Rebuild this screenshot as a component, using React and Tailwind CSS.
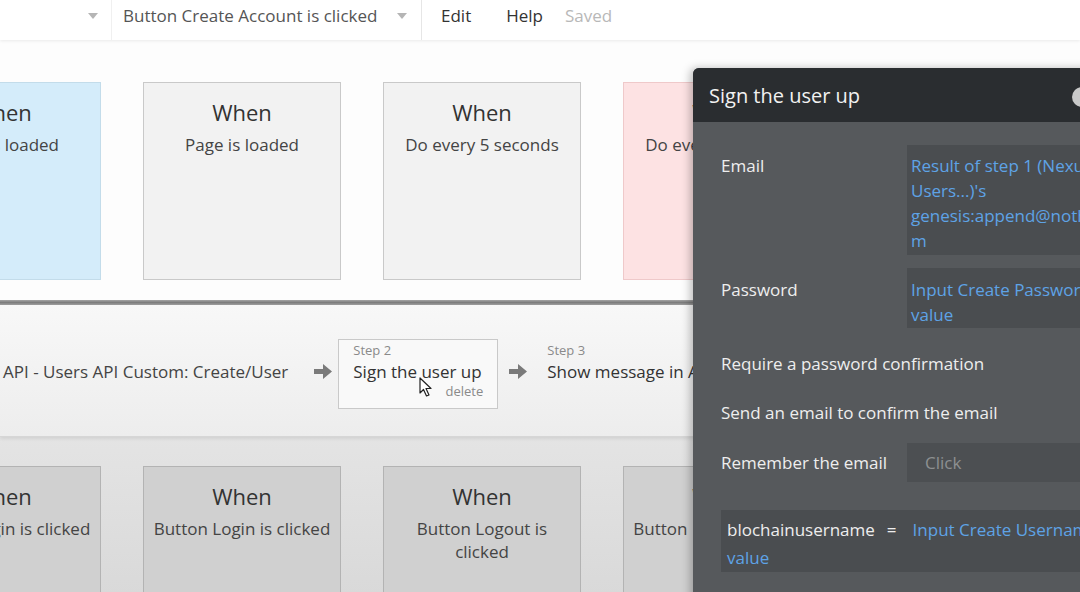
import React from "react";

function Arrow() {
  return (
    <svg width="18" height="17" viewBox="0 0 18 17" className="shrink-0">
      <path d="M0 6 H9 V1 L18 8.5 L9 16 V11 H0 Z" fill="#7a7a7a" />
    </svg>
  );
}

function Caret() {
  return (
    <svg width="10" height="6" viewBox="0 0 10 6">
      <path d="M0 0 H10 L5 6 Z" fill="#b5b5b5" />
    </svg>
  );
}

function Card({ tone, sub }) {
  const styles = {
    blue: "bg-[#d4ecfa] border-[#c3dcea]",
    gray: "bg-[#f2f2f2] border-[#c9c9c9]",
    pink: "bg-[#fde2e3] border-[#efc9ca]",
    dark: "bg-[#d0d0d0] border-[#b3b3b3]",
  };
  return (
    <div
      className={`w-[198px] h-[198px] shrink-0 border ${styles[tone]} flex flex-col items-center pt-[15px] px-[6px] text-center`}
    >
      <div className="text-[22px] leading-[28px] text-[#333]">When</div>
      <div className="mt-[7px] text-[17px] leading-[23px] text-[#444]">{sub}</div>
    </div>
  );
}

export default function App() {
  return (
    <div className="relative w-[1080px] h-[592px] overflow-hidden bg-white font-['Open_Sans',sans-serif]">
      {/* top bar */}
      <div className="h-[40px] flex items-stretch bg-white shadow-[0_1px_3px_rgba(0,0,0,0.08)] relative z-10">
        <div className="w-[112px] flex items-center justify-end pr-[13px] pb-[8px] border-r border-[#f0f0f0]">
          <Caret />
        </div>
        <div className="w-[310px] flex items-center pl-[11px] pb-[8px] border-r border-[#e6e6e6]">
          <span className="text-[17px] text-[#555] whitespace-nowrap">Button Create Account is clicked</span>
          <span className="ml-[20px]">
            <Caret />
          </span>
        </div>
        <div className="flex items-center pl-[19px] pb-[8px] text-[17px]">
          <span className="text-[#333]">Edit</span>
          <span className="ml-[35px] text-[#333]">Help</span>
          <span className="ml-[22px] text-[#b8b8b8]">Saved</span>
        </div>
      </div>

      {/* top cards */}
      <div className="h-[260px] pt-[42px] bg-[#fdfdfd]">
        <div className="flex gap-[42px] ml-[-97px]">
          <Card tone="blue" sub="Page is loaded" />
          <Card tone="gray" sub="Page is loaded" />
          <Card tone="gray" sub="Do every 5 seconds" />
          <Card tone="pink" sub="Do every 5 seconds" />
          <Card tone="gray" sub="Page is loaded" />
        </div>
      </div>

      {/* divider */}
      <div className="h-[5px] bg-gradient-to-b from-[#a5a5a5] via-[#7d7d7d] to-[#a0a0a0]" />

      {/* step row */}
      <div className="relative h-[132px] flex items-start pt-[34px] pl-[3px] bg-gradient-to-b from-[#f8f8f8] to-[#ededed] border-b border-[#d6d6d6] shadow-[0_2px_3px_rgba(0,0,0,0.08)]">
        <span className="mt-[22px] text-[17px] leading-[22px] text-[#444] whitespace-nowrap">API - Users API Custom: Create/User</span>
        <span className="ml-[26px] mt-[24px]">
          <Arrow />
        </span>
        <div className="ml-[6px] w-[160px] h-[70px] border border-[#c9c9c9] bg-[#f9f9f9] flex flex-col pl-[14px] pr-[14px] pt-[1px]">
          <span className="text-[13px] leading-[18px] text-[#8a8a8a]">Step 2</span>
          <span className="text-[17px] leading-[25px] text-[#333] whitespace-nowrap">Sign the user up</span>
          <span className="-mt-[2px] text-[13px] leading-[18px] text-[#8a8a8a] self-end">delete</span>
        </div>
        <span className="ml-[11px] mt-[24px]">
          <Arrow />
        </span>
        <div className="ml-[20px] pt-[2px] flex flex-col">
          <span className="text-[13px] leading-[18px] text-[#8a8a8a]">Step 3</span>
          <span className="text-[17px] leading-[25px] text-[#333] whitespace-nowrap">Show message in Alert</span>
        </div>
        {/* cursor */}
        <svg
          className="absolute left-[419px] top-[72px]"
          width="14"
          height="20"
          viewBox="0 0 14 20"
        >
          <path d="M1 1 L1 16 L4.5 12.5 L7.5 19 L10 18 L7 11.5 L12 11.5 Z" fill="#fff" stroke="#222" strokeWidth="1.2" strokeLinejoin="round" />
        </svg>
      </div>

      {/* bottom cards */}
      <div className="h-[200px] pt-[29px] bg-gradient-to-b from-[#e4e4e4] to-[#d6d6d6]">
        <div className="flex gap-[42px] ml-[-97px]">
          <Card tone="dark" sub="Button Login is clicked" />
          <Card tone="dark" sub="Button Login is clicked" />
          <Card tone="dark" sub="Button Logout is clicked" />
          <Card tone="dark" sub="Button Reset is clicked" />
          <Card tone="dark" sub="Button Reset is clicked" />
        </div>
      </div>

      {/* dark panel */}
      <div className="absolute left-[693px] top-[68px] w-[420px] h-[560px] rounded-tl-[6px] overflow-hidden bg-[#56595c] shadow-[-3px_0_8px_rgba(0,0,0,0.25)] z-20">
        <div className="relative h-[54px] bg-[#2a2d30] flex items-center pl-[16px]">
          <span className="text-[20px] text-[#f2f2f2] translate-y-[1px]">Sign the user up</span>
          <span className="absolute left-[379px] top-[19px] w-[20px] h-[20px] rounded-full bg-[#c9c9c9]" />
        </div>
        <div className="pl-[28px] pt-[23px] text-[17px] text-[#eeeeee]">
          {/* Email */}
          <div className="flex">
            <div className="w-[186px] shrink-0 pt-[8px] leading-[25px]">Email</div>
            <div className="flex-1 min-w-0 overflow-hidden bg-[#4a4d50] pl-[4px] pt-[8px] pb-[2px] leading-[25px] text-[#5ea3e6] whitespace-nowrap">
              <div>Result of step 1 (Nexus API - Users</div>
              <div>Users...)'s</div>
              <div>genesis:append@nothing.co</div>
              <div>m</div>
            </div>
          </div>
          {/* Password */}
          <div className="flex mt-[13px]">
            <div className="w-[186px] shrink-0 pt-[9px] leading-[25px]">Password</div>
            <div className="flex-1 min-w-0 overflow-hidden bg-[#4a4d50] pl-[4px] pt-[9px] pb-[1px] leading-[25px] text-[#5ea3e6] whitespace-nowrap">
              <div>Input Create Password's</div>
              <div>value</div>
            </div>
          </div>
          <div className="mt-[23px] leading-[25px]">Require a password confirmation</div>
          <div className="mt-[24px] leading-[25px]">Send an email to confirm the email</div>
          {/* Remember */}
          <div className="flex mt-[18px] items-center">
            <div className="w-[186px] shrink-0 leading-[25px]">Remember the email</div>
            <div className="flex-1 h-[39px] bg-[#4c4f52] pl-[18px] flex items-center text-[#8d8f91]">Click</div>
          </div>
          {/* custom field */}
          <div className="mt-[28px] bg-[#4a4d50] pl-[6px] pt-[6px] pb-[0px] leading-[28px] whitespace-nowrap">
            <div>
              <span className="text-[#eeeeee]">blochainusername</span>
              <span className="ml-[12px] text-[#eeeeee]">=</span>
              <span className="ml-[16px] text-[#5ea3e6]">Input Create Username's</span>
            </div>
            <div className="text-[#5ea3e6]">value</div>
          </div>
        </div>
      </div>
    </div>
  );
}
